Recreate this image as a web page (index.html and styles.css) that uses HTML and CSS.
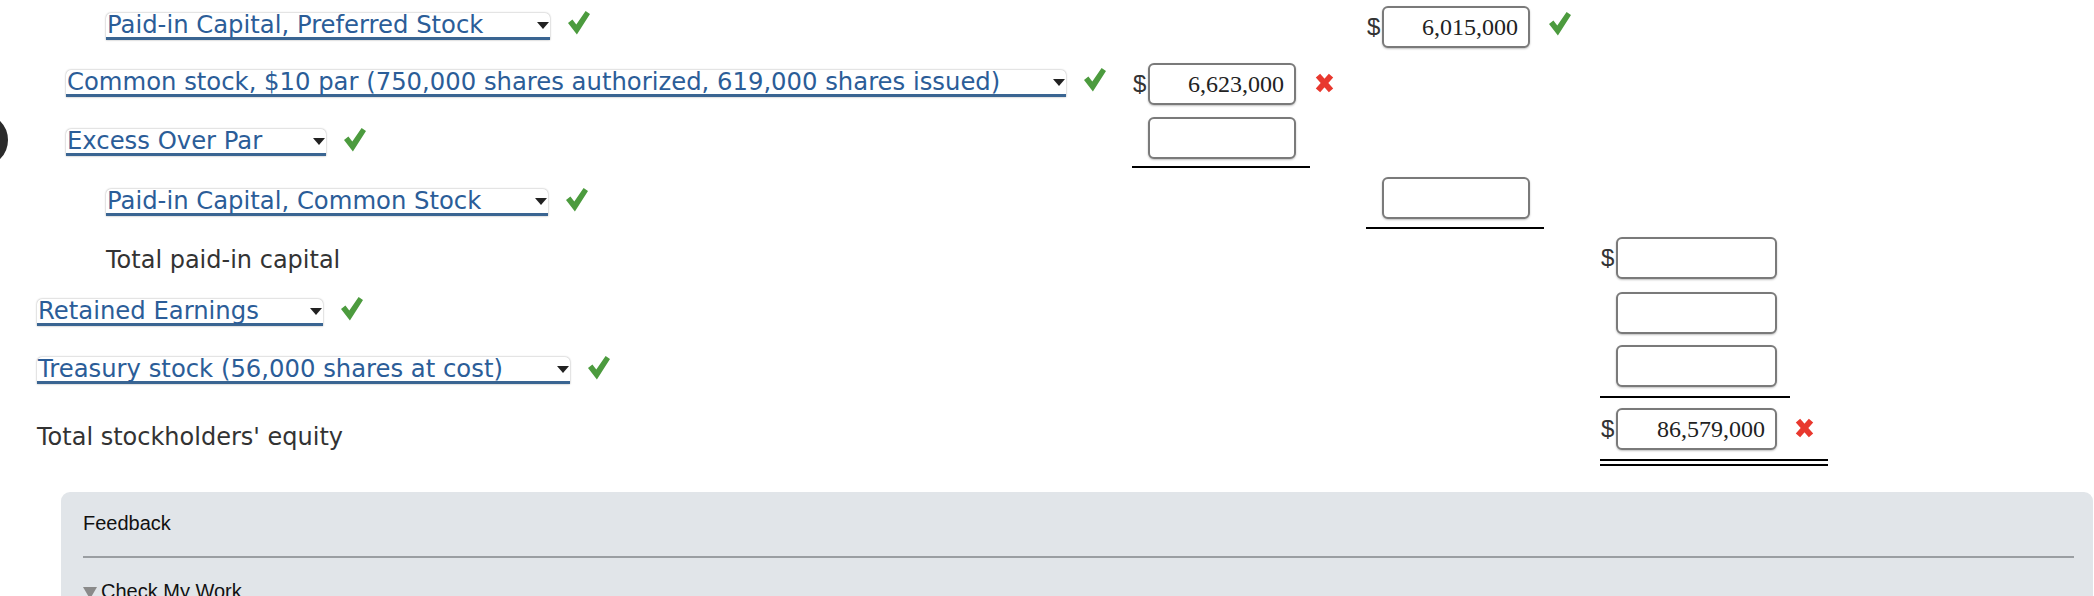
FILE: index.html
```html
<!DOCTYPE html>
<html lang="en">
<head>
<meta charset="utf-8">
<title>Stockholders' equity</title>
<link rel="stylesheet" href="styles.css">
</head>
<body>
<div class="step-badge"></div>
<main class="sheet">

  <div class="row row-1">
    <div class="label lv2">
      <div class="select w-pref"><span>Paid-in Capital, Preferred Stock</span><svg class="arrow" viewBox="0 0 12 7"><polygon points="0,0 12,0 6,7"/></svg></div>
      <svg class="check" viewBox="0 0 22 24"><polygon points="0,12 4.4,8.6 8.3,13.6 17.6,0 22,3 8.9,23.6"/></svg>
    </div>
    <div class="col"></div>
    <div class="col">
      <div class="amt"><span class="dollar">$</span><div class="input">6,015,000</div><svg class="check" viewBox="0 0 22 24"><polygon points="0,12 4.4,8.6 8.3,13.6 17.6,0 22,3 8.9,23.6"/></svg></div>
    </div>
    <div class="col"></div>
  </div>

  <div class="row row-2">
    <div class="label lv1">
      <div class="select w-common"><span>Common stock, $10 par (750,000 shares authorized, 619,000 shares issued)</span><svg class="arrow" viewBox="0 0 12 7"><polygon points="0,0 12,0 6,7"/></svg></div>
      <svg class="check" viewBox="0 0 22 24"><polygon points="0,12 4.4,8.6 8.3,13.6 17.6,0 22,3 8.9,23.6"/></svg>
    </div>
    <div class="col">
      <div class="amt"><span class="dollar">$</span><div class="input">6,623,000</div><svg class="cross" viewBox="0 0 18 19"><path d="M2.8 2.5 L15.2 16.5 M15.2 2.5 L2.8 16.5"/></svg></div>
    </div>
    <div class="col"></div>
    <div class="col"></div>
  </div>

  <div class="row row-3">
    <div class="label lv1 drop">
      <div class="select w-excess"><span>Excess Over Par</span><svg class="arrow" viewBox="0 0 12 7"><polygon points="0,0 12,0 6,7"/></svg></div>
      <svg class="check" viewBox="0 0 22 24"><polygon points="0,12 4.4,8.6 8.3,13.6 17.6,0 22,3 8.9,23.6"/></svg>
    </div>
    <div class="col">
      <div class="amt"><span class="dollar"></span><div class="input"></div></div>
      <div class="rule"></div>
    </div>
    <div class="col"></div>
    <div class="col"></div>
  </div>

  <div class="row row-4">
    <div class="label lv2 drop">
      <div class="select w-pcommon"><span>Paid-in Capital, Common Stock</span><svg class="arrow" viewBox="0 0 12 7"><polygon points="0,0 12,0 6,7"/></svg></div>
      <svg class="check" viewBox="0 0 22 24"><polygon points="0,12 4.4,8.6 8.3,13.6 17.6,0 22,3 8.9,23.6"/></svg>
    </div>
    <div class="col"></div>
    <div class="col">
      <div class="amt"><span class="dollar"></span><div class="input"></div></div>
      <div class="rule rule-b"></div>
    </div>
    <div class="col"></div>
  </div>

  <div class="row row-5">
    <div class="label lv2 text-label"><span class="plain">Total paid-in capital</span></div>
    <div class="col"></div>
    <div class="col"></div>
    <div class="col">
      <div class="amt"><span class="dollar">$</span><div class="input wide"></div></div>
    </div>
  </div>

  <div class="row row-6">
    <div class="label lv0">
      <div class="select w-retained"><span>Retained Earnings</span><svg class="arrow" viewBox="0 0 12 7"><polygon points="0,0 12,0 6,7"/></svg></div>
      <svg class="check" viewBox="0 0 22 24"><polygon points="0,12 4.4,8.6 8.3,13.6 17.6,0 22,3 8.9,23.6"/></svg>
    </div>
    <div class="col"></div>
    <div class="col"></div>
    <div class="col">
      <div class="amt"><span class="dollar"></span><div class="input wide"></div></div>
    </div>
  </div>

  <div class="row row-7">
    <div class="label lv0 drop">
      <div class="select w-treasury"><span>Treasury stock (56,000 shares at cost)</span><svg class="arrow" viewBox="0 0 12 7"><polygon points="0,0 12,0 6,7"/></svg></div>
      <svg class="check" viewBox="0 0 22 24"><polygon points="0,12 4.4,8.6 8.3,13.6 17.6,0 22,3 8.9,23.6"/></svg>
    </div>
    <div class="col"></div>
    <div class="col"></div>
    <div class="col">
      <div class="amt"><span class="dollar"></span><div class="input wide"></div></div>
      <div class="rule rule-c"></div>
    </div>
  </div>

  <div class="row row-8">
    <div class="label lv0 text-label"><span class="plain low">Total stockholders' equity</span></div>
    <div class="col"></div>
    <div class="col"></div>
    <div class="col">
      <div class="amt"><span class="dollar">$</span><div class="input wide">86,579,000</div><svg class="cross" viewBox="0 0 18 19"><path d="M2.8 2.5 L15.2 16.5 M15.2 2.5 L2.8 16.5"/></svg></div>
      <div class="double-rule"></div>
    </div>
  </div>

</main>

<section class="feedback">
  <div class="fb-title">Feedback</div>
  <div class="fb-line"></div>
  <div class="fb-toggle"><span class="tri"></span>Check My Work</div>
</section>
</body>
</html>
```

FILE: styles.css
```css
html, body {
  margin: 0;
  padding: 0;
  overflow: hidden;
  background: #ffffff;
}

body {
  position: relative;
  font-family: "DejaVu Sans", Verdana, sans-serif;
  font-size: 24px;
  color: #333333;
  height: 596px;
}

.step-badge {
  position: absolute;
  left: -46px;
  top: 113px;
  width: 54px;
  height: 54px;
  box-sizing: border-box;
  border: 9px solid #2b2b2b;
  border-radius: 50%;
}

.sheet {
  padding-top: 6px;
}

.row {
  display: grid;
  grid-template-columns: 1132px 234px 234px 1fr;
  align-items: start;
}

.row-2 { margin-top: 15px; }
.row-3 { margin-top: 12px; }
.row-4 { margin-top: 9px; }
.row-5 { margin-top: 8px; }
.row-6 { margin-top: 13px; }
.row-7 { margin-top: 11px; }
.row-8 { margin-top: 10px; }

.label {
  box-sizing: border-box;
  height: 42px;
  padding-top: 0;
  padding-bottom: 2px;
  display: flex;
  align-items: center;
  gap: 18px;
  white-space: nowrap;
}

.label.drop {
  height: 48px;
  padding-top: 3px;
  padding-bottom: 0;
}

.label.text-label {
  padding-top: 4px;
  padding-bottom: 0;
}

.lv0 { padding-left: 37px; }
.lv1 { padding-left: 66px; }
.lv2 { padding-left: 106px; }

.plain {
  color: #333333;
  line-height: 24px;
}

.plain.low {
  margin-top: 12px;
}

.select {
  box-sizing: border-box;
  height: 27px;
  line-height: 24px;
  font-size: 24.3px;
  display: flex;
  align-items: flex-start;
  justify-content: space-between;
  background: #ffffff;
  color: #2b5d98;
  border-bottom: 3px solid #3a6592;
  border-radius: 5px 5px 0 0;
  box-shadow: 0 0 2px rgba(0, 0, 0, 0.4);
  padding: 0 1px 0 1px;
}

.select span {
  display: block;
  line-height: 24px;
}

.w-pref { width: 444px; }
.w-common { width: 1000px; }
.w-excess { width: 260px; }
.w-pcommon { width: 442px; }
.w-retained { width: 286px; }
.w-treasury { width: 533px; }

.arrow {
  width: 12px;
  height: 7px;
  fill: #222222;
  flex: none;
  margin-top: 9px;
}

.check {
  width: 22px;
  height: 24px;
  fill: #4c9b3e;
  flex: none;
  margin-bottom: 6px;
}

.cross {
  width: 19px;
  height: 20px;
  flex: none;
  stroke: #e8382e;
  stroke-width: 5.5;
  fill: none;
  margin-bottom: 2px;
}

.col {
  display: flex;
  flex-direction: column;
  align-items: flex-start;
}

.amt {
  display: flex;
  align-items: center;
  height: 42px;
  gap: 0;
}

.dollar {
  width: 16px;
  flex: none;
  font-family: "Liberation Sans", Arial, sans-serif;
  font-size: 24px;
  color: #333333;
  padding-left: 1px;
  box-sizing: border-box;
}

.input {
  box-sizing: border-box;
  width: 148px;
  height: 42px;
  border: 2px solid #7a7a7a;
  border-radius: 6px;
  box-shadow: 0 1px 2px rgba(0, 0, 0, 0.25);
  background: #ffffff;
  font-family: "Liberation Serif", "Times New Roman", serif;
  font-size: 24px;
  line-height: 38px;
  color: #222222;
  text-align: right;
  padding-right: 10px;
  margin-right: 19px;
}

.input.wide {
  width: 161px;
  margin-right: 18px;
}

.rule {
  width: 178px;
  height: 2px;
  background: #000000;
  margin-top: 7px;
}

.rule-b { margin-top: 8px; }

.rule-c {
  width: 190px;
  margin-top: 9px;
}

.double-rule {
  width: 228px;
  height: 3px;
  border-top: 2px solid #000000;
  border-bottom: 2px solid #000000;
  margin-top: 9px;
}

.feedback {
  margin: 26px 1px 0 61px;
  height: 200px;
  background: #e1e5e9;
  border-radius: 9px 9px 0 0;
  padding: 20px 19px 0 22px;
  font-family: "Liberation Sans", Arial, sans-serif;
  color: #111111;
}

.fb-title {
  font-size: 20px;
  line-height: 23px;
}

.fb-line {
  height: 2px;
  background: #9a9ea2;
  margin-top: 21px;
}

.fb-toggle {
  margin-top: 22px;
  font-size: 20px;
  line-height: 23px;
  display: flex;
  align-items: center;
}

.tri {
  width: 0;
  height: 0;
  border-left: 7px solid transparent;
  border-right: 7px solid transparent;
  border-top: 12px solid #8a8a8a;
  margin-right: 4px;
  margin-top: 2px;
}
```
